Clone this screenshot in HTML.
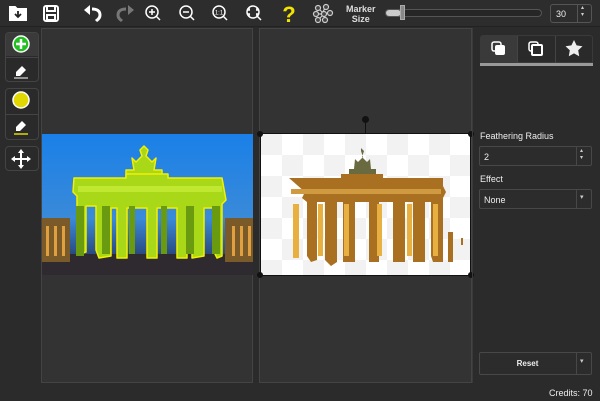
<!DOCTYPE html>
<html><head><style>
*{margin:0;padding:0;box-sizing:border-box}
body{width:600px;height:401px;background:#2b2b2b;font-family:"Liberation Sans",sans-serif;color:#eee;position:relative;overflow:hidden}
.abs{position:absolute}
.panel{position:absolute;top:28px;height:355px;background:#333;border:1px solid #444}
.btn{position:absolute;left:5px;width:34px;background:#2a2a2a;border:1px solid #444;border-radius:4px}
.lbl{font-size:9px;font-weight:bold;position:absolute}
.inp{position:absolute;left:479px;width:113px;height:20px;border:1px solid #484848;background:#2c2c2c;border-radius:2px;font-size:9px;padding:5px 4px}
</style></head><body>
<div class="abs" style="left:0;top:0;width:600px;height:27px;background:#2d2d2d;border-bottom:1px solid #222"></div>
<svg class="abs" style="left:0;top:0" width="600" height="27">
 <g fill="none" stroke="#fff" stroke-width="2">
  <path d="M10 7h5l2 2h9v11H10z" fill="#fff"/><path d="M18 11v6M15 14l3 3 3-3" stroke="#222" stroke-width="1.8"/>
  <rect x="44" y="6" width="14" height="15" rx="2"/><path d="M47 7v4h8V7M47 15h8v5h-8z"/>
  <path d="M92 9c5 0 8 2 8 6s-3 5-4 6" stroke-width="3"/><path d="M84 10l6-5v10z" fill="#fff" stroke="none"/>
  <path d="M126 9c-5 0-8 2-8 6s3 5 4 6" stroke="#777" stroke-width="3"/><path d="M134 10l-6-5v10z" fill="#777" stroke="none"/>
  <g stroke-width="1.5"><circle cx="152" cy="12" r="6"/><path d="M156 16l4 4M149 12h6M152 9v6"/>
  <circle cx="186" cy="12" r="6"/><path d="M190 16l4 4M183 12h6"/>
  <circle cx="219" cy="12" r="6"/><path d="M223 16l4 4"/>
  <circle cx="253" cy="12" r="6"/><path d="M257 16l4 4M250 9h-1v2M256 9h1v2M250 15h-1v-2M256 15h1v-2"/></g>
 </g>
 <text x="219" y="14.5" fill="#fff" font-size="6" font-family="Liberation Sans" text-anchor="middle">1:1</text>
 <text x="289" y="22" fill="#f2e400" font-size="22" font-weight="bold" font-family="Liberation Sans" text-anchor="middle">?</text>
 <g stroke="#ccc" fill="#444" stroke-width="1.2"><path d="M318 8l6 6-6 6M326 7l-4 6M316 14h10" fill="none"/>
 <circle cx="318" cy="8" r="2.5"/><circle cx="326" cy="7" r="2.5"/><circle cx="316" cy="14" r="2.5"/><circle cx="324" cy="14" r="2.5"/><circle cx="330" cy="13" r="2.5"/><circle cx="318" cy="20" r="2.5"/><circle cx="325" cy="20" r="2.5"/></g>
</svg>
<div class="lbl" style="left:346px;top:4px;line-height:10px;text-align:center;color:#ddd">Marker<br>Size</div>
<div class="abs" style="left:385px;top:9px;width:157px;height:8px;border:1px solid #555;border-radius:4px;background:#262626"></div>
<div class="abs" style="left:386px;top:10px;width:15px;height:6px;background:#ccc;border-radius:3px"></div>
<div class="abs" style="left:400px;top:5px;width:5px;height:15px;background:#888;border:1px solid #aaa"></div>
<div class="abs" style="left:550px;top:4px;width:42px;height:19px;border:1px solid #555;border-radius:3px;font-size:9px;padding:4px 5px">30</div>
<div class="abs" style="left:577px;top:4px;width:1px;height:19px;background:#555"></div>
<div class="abs" style="left:581px;top:5px;font-size:6px;line-height:7px;color:#ccc">▴<br>▾</div>
<div class="btn" style="top:32px;height:50px"></div>
<div class="abs" style="left:6px;top:33px;width:32px;height:23px;background:#3a3a3a;border-radius:3px 3px 0 0"></div>
<div class="btn" style="top:88px;height:52px"></div>
<div class="btn" style="top:146px;height:25px"></div>
<div class="abs" style="left:5px;top:57px;width:34px;height:1px;background:#444"></div>
<div class="abs" style="left:5px;top:114px;width:34px;height:1px;background:#444"></div>
<svg class="abs" style="left:0;top:28px" width="42" height="150">
 <circle cx="21" cy="16" r="8" fill="#20c020" stroke="#fff" stroke-width="1.5"/><path d="M16 16h10M21 11v10" stroke="#fff" stroke-width="2.5"/>
 <path d="M16 44l6-6 4 4-6 6h-4z" fill="#fff"/><path d="M14 50h14" stroke="#fff"/>
 <circle cx="21" cy="72" r="8" fill="#e0d800" stroke="#fff" stroke-width="1.5"/>
 <path d="M16 99l6-6 4 4-6 6h-4z" fill="#fff"/><path d="M14 106h14" stroke="#e0d800" stroke-width="1.5"/>
 <path d="M21 124v14M14 131h14" stroke="#fff" stroke-width="2"/><path d="M21 121l-3 4h6zM21 141l-3-4h6zM11 131l4-3v6zM31 131l-4-3v6z" fill="#fff"/>
</svg>
<div class="panel" style="left:41px;width:212px"></div>
<div class="panel" style="left:259px;width:213px"></div>
<svg class="abs" style="left:42px;top:134px" width="211" height="141">
 <defs><linearGradient id="sky" x1="0" y1="0" x2="0" y2="1"><stop offset="0" stop-color="#1a80e8"/><stop offset=".6" stop-color="#3a8ad8"/><stop offset=".85" stop-color="#2a4a80"/></linearGradient></defs>
 <rect width="211" height="141" fill="url(#sky)"/>
 <rect x="0" y="120" width="211" height="21" fill="#2e2a30"/>
 <rect x="0" y="84" width="28" height="44" fill="#7a5a28"/><rect x="183" y="84" width="28" height="44" fill="#7a5a28"/>
 <g fill="#e0a040"><rect x="4" y="92" width="3" height="30"/><rect x="12" y="92" width="3" height="30"/><rect x="20" y="92" width="3" height="30"/><rect x="190" y="92" width="3" height="30"/><rect x="198" y="92" width="3" height="30"/><rect x="206" y="92" width="3" height="30"/></g>
 <g fill="#a8d818" stroke="#f4f000" stroke-width="1.5" stroke-linejoin="round">
  <path d="M102 12l4 4-2 6 6 6 4-4-2 12 8 0v8H84v-8h8l-2-12 4 4 6-6-2-6z"/>
  <path d="M32 44h52v-4h42v4h54l4 22-4 4v52l-5 2-3-6v-44h-10v48l-12 2v-50h-5v50h-10v-50h-20v50h-10v-50h-20v50h-10v-50h-6v48l-12 2-3-8v-44h-10v46l-6 2-3-8v-50l-4-4z"/>
 </g>
 <g fill="#6a9a10"><rect x="34" y="72" width="8" height="50"/><rect x="60" y="72" width="8" height="48"/><rect x="87" y="72" width="6" height="48"/><rect x="119" y="72" width="6" height="48"/><rect x="144" y="72" width="8" height="48"/><rect x="170" y="72" width="8" height="48"/></g>
 <rect x="36" y="52" width="144" height="6" fill="#c0e830"/>
</svg>
<svg class="abs" style="left:261px;top:134px" width="209" height="141">
 <defs><pattern id="ck" width="42" height="42" patternUnits="userSpaceOnUse"><rect width="42" height="42" fill="#fff"/><rect width="21" height="21" fill="#f2f2f2"/><rect x="21" y="21" width="21" height="21" fill="#f2f2f2"/></pattern></defs>
 <rect width="209" height="141" fill="url(#ck)"/>
 <path d="M100 14l3 3-2 6 5 5 3-3 1 10 5 0v8H88v-8h5l1-10 3 3 5-5-2-6z" fill="#6a6a40"/>
 <g fill="#a87020">
  <path d="M28 44h52v-4h42v4h60v8l3 6-3 6v64h-10l-2-6v-54h-6v60h-12v-60h-8v60h-12v-60h-14v60h-10v-60h-14v60h-12v-60h-6v60l-6 4-6-6v-58h-8v58l-6 2-4-6v-54l-5-4 3-6z"/>
 </g>
 <g fill="#e8b040"><rect x="32" y="70" width="6" height="54"/><rect x="57" y="70" width="5" height="52"/><rect x="83" y="70" width="5" height="52"/><rect x="116" y="70" width="5" height="52"/><rect x="146" y="70" width="5" height="52"/><rect x="172" y="70" width="5" height="52"/></g>
 <rect x="30" y="55" width="150" height="5" fill="#d09a40"/>
 <rect x="187" y="98" width="5" height="30" fill="#a87020"/><rect x="200" y="104" width="2" height="7" fill="#a87020"/>
</svg>
<div class="abs" style="left:260px;top:133px;width:211px;height:143px;border:1px solid #111"></div>
<div class="abs" style="left:365px;top:120px;width:1px;height:14px;background:#111"></div>
<div class="abs" style="left:362px;top:116px;width:7px;height:7px;border-radius:50%;background:#111"></div>
<div class="abs" style="left:257px;top:131px;width:6px;height:6px;border-radius:50%;background:#111"></div>
<div class="abs" style="left:468px;top:131px;width:6px;height:6px;border-radius:50%;background:#111"></div>
<div class="abs" style="left:257px;top:272px;width:6px;height:6px;border-radius:50%;background:#111"></div>
<div class="abs" style="left:468px;top:272px;width:6px;height:6px;border-radius:50%;background:#111"></div>
<div class="abs" style="left:480px;top:35px;width:113px;height:28px;border:1px solid #3a3a3a;border-radius:3px 3px 0 0;background:#2a2a2a"></div>
<div class="abs" style="left:481px;top:36px;width:36px;height:27px;background:#3a3a3a"></div>
<div class="abs" style="left:517px;top:36px;width:1px;height:27px;background:#444"></div>
<div class="abs" style="left:555px;top:36px;width:1px;height:27px;background:#444"></div>
<div class="abs" style="left:480px;top:63px;width:113px;height:3px;background:#999"></div>
<svg class="abs" style="left:480px;top:35px" width="113" height="28">
 <rect x="12" y="7" width="9" height="9" rx="2" fill="none" stroke="#fff" stroke-width="1.5"/><rect x="15" y="10" width="10" height="10" rx="2" fill="#fff"/>
 <rect x="49" y="7" width="9" height="9" rx="2" fill="none" stroke="#fff" stroke-width="1.5"/><rect x="52" y="10" width="10" height="10" rx="1" fill="#2a2a2a" stroke="#fff" stroke-width="2"/>
 <path d="M94 5l2.6 5.4 5.9.8-4.3 4.1 1 5.9-5.2-2.8-5.2 2.8 1-5.9-4.3-4.1 5.9-.8z" fill="#eee"/>
</svg>
<div class="abs" style="left:472px;top:28px;width:1px;height:355px;background:#3a3a3a"></div>
<div class="lbl" style="left:480px;top:131px;font-weight:normal;color:#eee">Feathering Radius</div>
<div class="inp" style="top:146px">2</div>
<div class="abs" style="left:576px;top:146px;width:1px;height:20px;background:#484848"></div>
<div class="abs" style="left:580px;top:148px;font-size:6px;line-height:7px;color:#ccc">▴<br>▾</div>
<div class="lbl" style="left:480px;top:174px;font-weight:normal">Effect</div>
<div class="inp" style="top:189px">None</div>
<div class="abs" style="left:576px;top:189px;width:1px;height:20px;background:#484848"></div>
<div class="abs" style="left:580px;top:193px;font-size:7px;color:#ccc">▾</div>
<div class="abs" style="left:479px;top:352px;width:113px;height:23px;border:1px solid #484848;background:#2c2c2c;border-radius:2px;font-size:8px;font-weight:bold;text-align:center;line-height:21px;padding-right:16px">Reset</div>
<div class="abs" style="left:576px;top:352px;width:1px;height:23px;background:#484848"></div>
<div class="abs" style="left:580px;top:357px;font-size:7px;color:#ccc">▾</div>
<div class="abs" style="left:549px;top:388px;font-size:9px;color:#eee">Credits: 70</div>
</body></html>
